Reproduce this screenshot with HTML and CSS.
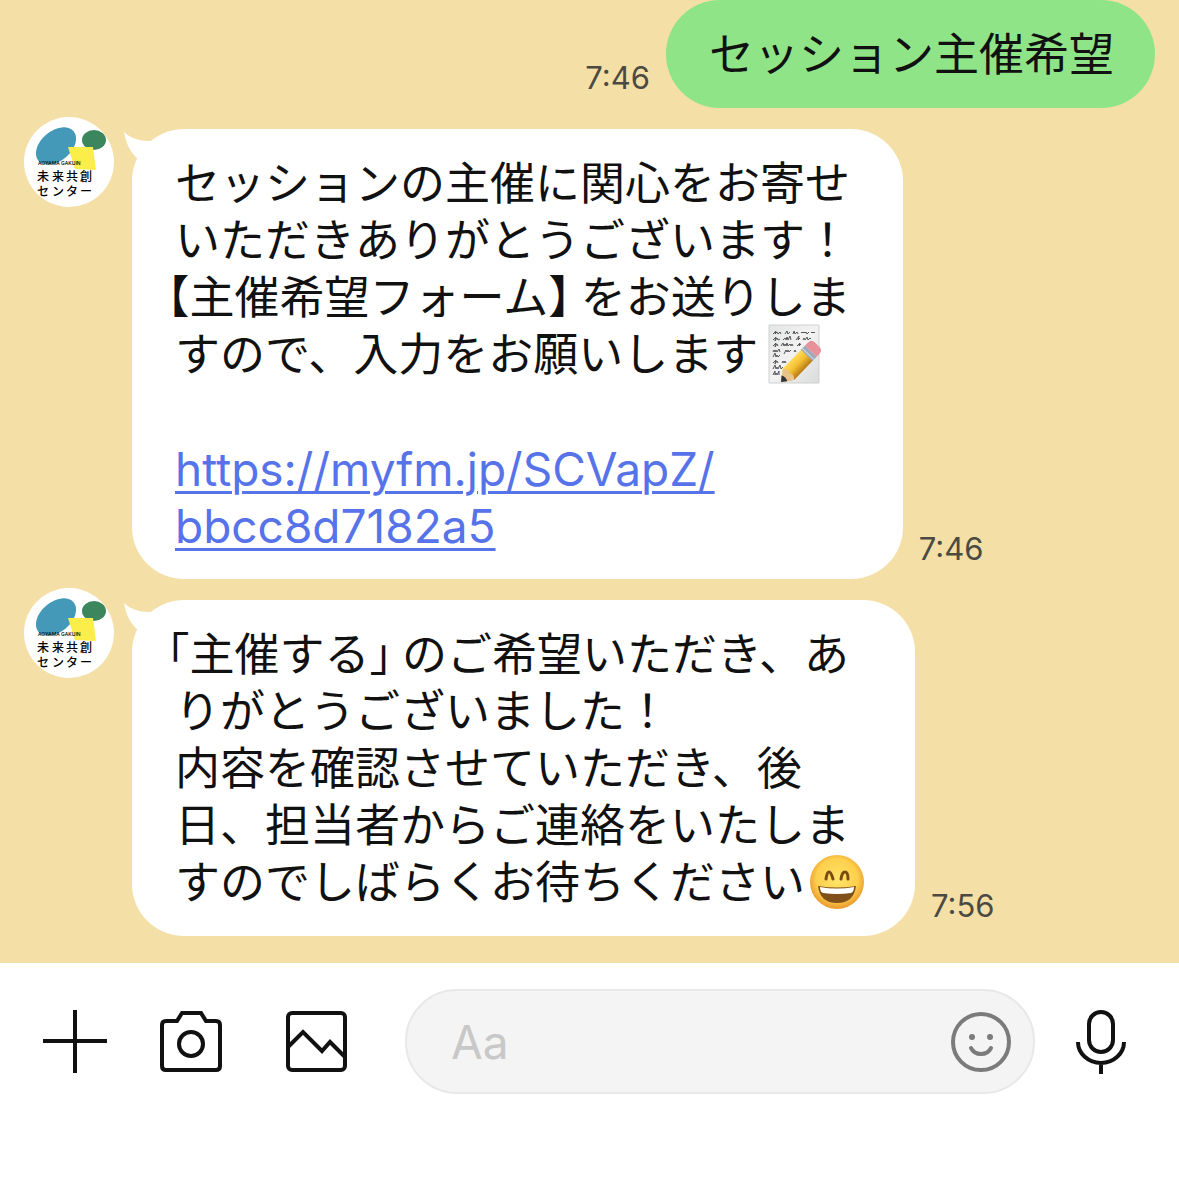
FILE: index.html
```
<!DOCTYPE html>
<html lang="ja">
<head>
  <meta charset="UTF-8">
  <meta name="viewport" content="width=device-width, initial-scale=1">
  <title>未来共創センター</title>
  <link rel="stylesheet" href="styles.css">
</head>
<body>
<!-- shared avatar -->
<svg class="defs" width="0" height="0">
  <symbol id="avatar" viewBox="0 0 90 90">
    <circle cx="45" cy="45" r="45" fill="#fff"/>
    <ellipse cx="32" cy="29" rx="23" ry="15" transform="rotate(-40 32 29)" fill="#4498b8"/>
    <ellipse cx="70" cy="23" rx="12" ry="10" fill="#3b865c"/>
    <path d="M44 30l25 0 3 23-21-1z" fill="#fbee4b"/>
    <text x="14" y="48" class="logo-sub">AOYAMA GAKUIN</text>
    <text x="13 28 42 56" y="64" class="logo-text">未来共創</text>
    <text x="13 28 42 56" y="79" class="logo-text">センター</text>
  </symbol>
</svg>

<main class="chat">
  <div class="row sent">
    <time class="time">7:46</time>
    <div class="bubble">セッション主催希望</div>
  </div>

  <div class="row">
    <svg class="avatar" role="img" aria-label="未来共創センター"><use href="#avatar"/></svg>
    <div class="bubble">
      <svg class="tail" viewBox="0 0 34 34"><path d="M0 3C6 9 15 12 26 12L34 14 26 34 13 29C7 24 2 15 0 3z" fill="#fff"/></svg>
      セッションの主催に関心をお寄せ<br>
      いただきありがとうございます！<br>
      <span class="open">【</span>主催希望フォーム<span class="close">】</span>をお送りしま<br>
      すので、入力をお願いします<svg class="emoji" viewBox="-8 -1 58 60" role="img" aria-label="メモ">
        <defs>
          <linearGradient id="paper" x1="0" y1="0" x2="1" y2="1"><stop offset="0" stop-color="#e4e5e5"/><stop offset=".5" stop-color="#f2f2f2"/><stop offset="1" stop-color="#d9dada"/></linearGradient>
          <linearGradient id="wood" x1="0" y1="0" x2="0" y2="1"><stop offset="0" stop-color="#ffdc55"/><stop offset=".5" stop-color="#f3bd32"/><stop offset="1" stop-color="#b87a12"/></linearGradient>
        </defs>
        <path d="M3 1h50v58H3z" fill="url(#paper)" stroke="#cfd0d0"/>
        <g fill="none" stroke="#555" stroke-width="1" stroke-linejoin="round">
          <path d="M7 10l3-3-1 3 2-2 1 2 2-2 1 2M19 10l2-3 1 3 2-2M27 10l1-3 1 3 2-2 1 2M35 9l1-1 1 1 1-1 1 1 1-1 1 2 2-2M45 9l1-1 1 1 1-1 1 1"/>
          <path d="M7 16l3-3-1 4 2-3 1 2 2-1M17 16l2-2 1 2 1-3 1 3 2-4 1 4M30 16l3-4-1 4 2-2M37 16l1-2 1 2 2-3 1 3 2-2 1 1"/>
          <path d="M7 22l3-3-1 4 2-3 1 2M15 22l2-3 1 3 1-2 1 2 1-3 1 3 2-2 1 2 1-2 1 2M31 22l3-3-1 3 2-2"/>
          <path d="M7 28l1-2 1 2 1-2 1 2 2-3 1 3M18 30l2-4 1 2 1-2 1 2 2-2M28 28l1-2 1 2"/>
          <path d="M7 33l2-4 1 4 1-2 1 2 2-2M7 39l3-3-1 4 2-3 1 2M16 39l1-2 1 2 1-2 1 2M7 45l2-4 1 4 1-2 1 2 2-4 1 4 2-2M7 51l2-4v4l1-2 1 2 2-4v4M16 52l2-3"/>
        </g>
        <g transform="translate(15 58) rotate(-46)">
          <path d="M0 0L11-8H39V8H11z" fill="url(#wood)"/>
          <path d="M0 0L11-8Q15-3 12 0 15 3 11 8z" fill="#e8c48c"/>
          <path d="M0 0l5-4q2 4 0 8z" fill="#333"/>
          <path d="M37-8h6V8h-6z" fill="#9daab8"/>
          <path d="M39-8V8" stroke="#d5dce3"/>
          <path d="M43-8h4q5 0 5 5v6q0 5-5 5h-4z" fill="#e8919a"/>
        </g>
      </svg><br>
      <br>
      <a class="link" href="https://myfm.jp/SCVapZ/bbcc8d7182a5">https://myfm.jp/SCVapZ/<br>bbcc8d7182a5</a>
    </div>
    <time class="time">7:46</time>
  </div>

  <div class="row">
    <svg class="avatar" role="img" aria-label="未来共創センター"><use href="#avatar"/></svg>
    <div class="bubble">
      <svg class="tail" viewBox="0 0 34 34"><path d="M0 3C6 9 15 12 26 12L34 14 26 34 13 29C7 24 2 15 0 3z" fill="#fff"/></svg>
      <span class="open">「</span>主催する<span class="close">」</span>のご希望いただき、あ<br>
      りがとうございました！<br>
      内容を確認させていただき、後<br>
      日、担当者からご連絡をいたしま<br>
      すのでしばらくお待ちください<svg class="emoji" viewBox="-1 -1 58 60" role="img" aria-label="笑顔">
        <defs>
          <radialGradient id="face" cx=".5" cy=".45" r=".55"><stop offset="0" stop-color="#ffe467"/><stop offset=".7" stop-color="#fdcf4c"/><stop offset="1" stop-color="#e9962b"/></radialGradient>
        </defs>
        <circle cx="31" cy="30" r="27" fill="url(#face)"/>
        <path d="M20 27q1-7 3-7t4 7M35 27q1-7 4-7t3 7" fill="none" stroke="#7b4a12" stroke-width="3" stroke-linecap="round"/>
        <path d="M12 34Q31 37 50 34 48 51 31 51 14 51 12 34z" fill="#805018"/>
        <path d="M14 35Q31 38 48 35 48 40 45 41 31 43 17 41 14 40 14 35z" fill="#fff"/>
      </svg>
    </div>
    <time class="time">7:56</time>
  </div>
</main>

<form class="toolbar">
  <button type="button" class="tool" aria-label="追加">
    <svg width="64" height="64" viewBox="0 0 64 64"><path d="M32 0V63M0 31H64"/></svg>
  </button>
  <button type="button" class="tool" aria-label="カメラ">
    <svg width="64" height="64" viewBox="0 0 64 64"><path d="M7 11H18L23 3H42L47 11H57Q61 11 61 15V56Q61 60 57 60H7Q3 60 3 56V15Q3 11 7 11z"/><circle cx="32" cy="34" r="12"/></svg>
  </button>
  <button type="button" class="tool photo" aria-label="写真">
    <svg width="64" height="64" viewBox="0 0 64 64"><rect x="3" y="3" width="57" height="57" rx="4"/><path d="M3 37L18 22 37 41 45 32 60 47"/></svg>
  </button>
  <div class="field">
    <input class="message" type="text" placeholder="Aa" aria-label="メッセージ">
    <button type="button" class="tool smile" aria-label="スタンプ">
      <svg width="60" height="60" viewBox="0 0 60 60"><circle cx="30" cy="30" r="28"/><path d="M20 36Q23 42 30 42T40 36" stroke-linecap="round"/><circle class="eye" cx="21" cy="25" r="3"/><circle class="eye" cx="39" cy="25" r="3"/></svg>
    </button>
  </div>
  <button type="button" class="tool" aria-label="音声">
    <svg width="50" height="64" viewBox="0 0 50 64"><rect x="13" y="2" width="24" height="40" rx="12"/><path d="M2 32A23 21 0 0 0 48 32M25 53V64"/></svg>
  </button>
</form>
</body>
</html>
```
FILE: styles.css
```
* {
  box-sizing: border-box;
}

body {
  margin: 0;
  min-height: 100vh;
  background-color: #fff;
  color: #111;
  font-family: "Noto Sans CJK JP", sans-serif;
  font-size: 45px;
  line-height: 57px;
}

.defs {
  position: absolute;
}

.chat {
  display: flex;
  flex-direction: column;
  gap: 9px;
  padding: 0 24px 27px;
  background-color: #f4dfa7;
}

.row {
  display: flex;
  align-items: flex-end;
  gap: 16px;
}

.sent {
  justify-content: flex-end;
}

.avatar {
  flex: none;
  align-self: flex-start;
  width: 90px;
  height: 90px;
  margin-right: 2px;
}

.logo-sub {
  font: 500 5px Inter, sans-serif;
}

.logo-text {
  font: 500 12px "Noto Sans CJK JP", sans-serif;
}

.bubble {
  position: relative;
  margin-top: 12px;
  padding: 23px 52px 28px 43px;
  border-radius: 52px;
  background-color: #fff;
  white-space: nowrap;
}

.sent .bubble {
  margin-top: 0;
  padding-right: 41px;
  border-radius: 54px;
  background-color: #8fe488;
}

.tail {
  position: absolute;
  top: 0;
  left: -8px;
  width: 34px;
  height: 34px;
}

/* half-width brackets, the opening one hangs into the padding */
.open,
.close {
  font-feature-settings: "halt";
}

.open {
  margin-left: -8px;
}

.close {
  margin-right: 10px;
}

.emoji {
  width: 58px;
  height: 60px;
  margin: -10px 0;
  overflow: visible;
  vertical-align: -2px;
}

.link {
  display: block;
  padding-top: 4px;
  margin-bottom: -4px;
  color: #5773ea;
  font-family: Inter, sans-serif;
  font-size: 46px;
  text-decoration-thickness: 3px;
  text-underline-offset: 5px;
}

.time {
  margin-bottom: 12px;
  color: #4b4a42;
  font-family: Inter, sans-serif;
  font-size: 31px;
  line-height: 36px;
}

.toolbar {
  display: flex;
  align-items: center;
  padding: 26px 53px 0 43px;
}

.tool {
  display: flex;
  flex: none;
  margin: 0 52px 0 0;
  padding: 0;
  border: 0;
  background: none;
}

.tool svg {
  fill: none;
  stroke: #111;
  stroke-width: 4px;
}

.photo {
  margin: 0 56px 0 10px;
}

.field {
  display: flex;
  flex: 1;
  align-items: center;
  min-width: 0;
  height: 105px;
  margin-right: 41px;
  padding: 0 22px 0 44px;
  border: 2px solid #e8e8e8;
  border-radius: 52px;
  background-color: #f4f4f4;
}

.message {
  flex: 1;
  min-width: 0;
  padding: 0;
  border: 0;
  outline: 0;
  background: none;
  font-family: Inter, sans-serif;
  font-size: 46px;
}

.message::placeholder {
  color: #c8c8c8;
}

.smile,
.tool:last-child {
  margin-right: 0;
}

.smile svg {
  stroke: #7b7b7b;
}

.smile .eye {
  fill: #7b7b7b;
  stroke: none;
}
```
